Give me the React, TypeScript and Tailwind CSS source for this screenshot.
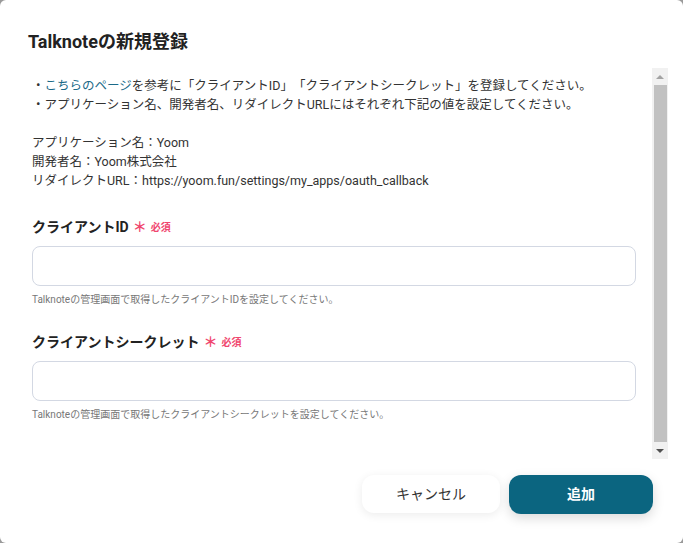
const fieldStyle =
  "w-full h-10 rounded-lg border border-[#d3d8e3] bg-white px-3 text-sm outline-none";

function Field({ label, help }: { label: string; help: string }) {
  return (
    <div>
      <div className="flex items-center gap-1 h-6">
        <span className="text-[14px] font-bold text-[#222]">{label}</span>
        <span className="text-[14px] font-bold text-[#f0466e] leading-none">＊</span>
        <span className="text-[10px] font-bold text-[#f0466e]">必須</span>
      </div>
      <input className={`${fieldStyle} mt-[7px]`} />
      <p className="mt-[4px] text-[10px] text-[#777]">{help}</p>
    </div>
  );
}

function ScrollBar() {
  return (
    <div className="w-[16px] bg-[#f1f1f1] flex flex-col items-center">
      <div className="h-[17px] flex items-center justify-center">
        <div className="w-0 h-0 border-x-[4px] border-x-transparent border-b-[4px] border-b-[#a3a3a3]" />
      </div>
      <div className="w-[13px] flex-1 bg-[#c1c1c1]" />
      <div className="h-[17px] flex items-center justify-center">
        <div className="w-0 h-0 border-x-[4px] border-x-transparent border-t-[4px] border-t-[#505050]" />
      </div>
    </div>
  );
}

export default function App() {
  return (
    <div className="w-[683px] h-[543px] bg-[#9a9a9a]">
      <div
        className="w-full h-full bg-white rounded-md flex flex-col text-[#333] [text-spacing-trim:space-all]"
        style={{ fontFamily: 'Roboto, "Noto Sans CJK JP", sans-serif' }}
      >
        <h2 className="pl-7 pt-[28px] h-[68px] text-[18px] font-bold text-[#222]">Talknoteの新規登録</h2>
        <div className="ml-4 mr-[15px] h-[391px] flex">
          <div className="flex-1 overflow-hidden pl-4 pr-[16px] pt-[8px] text-[12.5px] leading-[19px]">
            <p>
              ・<span className="text-[#1b6a88]">こちらのページ</span>を参考に「クライアントID」「クライアントシークレット」を登録してください。
            </p>
            <p>・アプリケーション名、開発者名、リダイレクトURLにはそれぞれ下記の値を設定してください。</p>
            <p className="mt-[19px]">アプリケーション名：Yoom</p>
            <p>開発者名：Yoom株式会社</p>
            <p>リダイレクトURL：https://yoom.fun/settings/my_apps/oauth_callback</p>
            <div className="mt-[25px]">
              <Field label="クライアントID" help="Talknoteの管理画面で取得したクライアントIDを設定してください。" />
            </div>
            <div className="mt-[21px]">
              <Field
                label="クライアントシークレット"
                help="Talknoteの管理画面で取得したクライアントシークレットを設定してください。"
              />
            </div>
          </div>
          <ScrollBar />
        </div>
        <div className="flex justify-end gap-[9px] pr-[30px] pt-[16px]">
          <button className="w-[138px] h-[38px] rounded-xl bg-white text-[14px] text-[#333] shadow-[0_2px_10px_rgba(0,0,0,0.08)]">
            キャンセル
          </button>
          <button className="w-[144px] h-[39px] rounded-xl bg-[#0b6580] text-[14px] font-bold text-white shadow-[0_4px_12px_rgba(0,0,0,0.15)]">
            追加
          </button>
        </div>
      </div>
    </div>
  );
}
